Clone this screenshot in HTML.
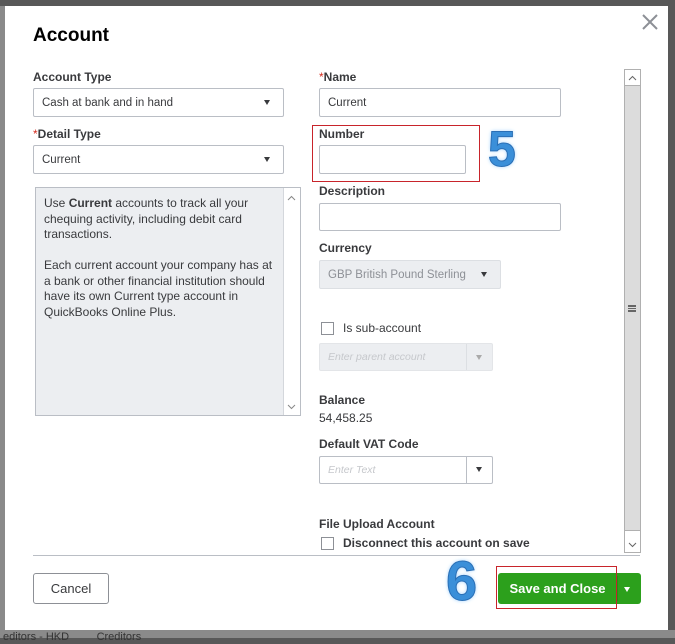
<!DOCTYPE html>
<html><head><meta charset="utf-8"><style>
*{box-sizing:border-box;margin:0;padding:0}
body{width:675px;height:638px;overflow:hidden;background:#585858;font-family:"Liberation Sans",sans-serif;color:#393a3d;position:relative}
.a{position:absolute}
.lbl{position:absolute;font-size:12px;font-weight:bold;color:#393a3d}
.req{color:#d52b1e;font-weight:normal}
.inp{position:absolute;border:1px solid #babec5;border-radius:2px;background:#fff;font-size:11.5px;padding-left:8px;display:flex;align-items:center}
.tri{position:absolute;width:0;height:0;border-left:3.5px solid transparent;border-right:3.5px solid transparent;border-top:5px solid #393a3d}
.cb{position:absolute;width:13px;height:13px;border:1px solid #8d9096;background:#fff}
.big{position:absolute;font-weight:bold;color:#3a8fd9;font-size:50px;text-shadow:0 0 3px #bfe0ff,0 0 5px #bfe0ff;-webkit-text-stroke:1px #2a6fb5}
</style></head><body>
<div class="a" style="left:0;top:6px;width:5px;height:632px;background:#8a8a8a"></div>
<div class="a" style="left:0;top:630px;width:675px;height:8px;background:#8a8a8a;font-size:11px;color:#333;line-height:14px;white-space:nowrap">&nbsp;editors - HKD&nbsp;&nbsp;&nbsp;&nbsp;&nbsp;&nbsp;&nbsp;&nbsp;&nbsp;Creditors</div>
<div class="a" style="left:5px;top:6px;width:663px;height:624px;background:#fff"></div>

<div class="a" style="left:33px;top:25px;font-size:19px;font-weight:bold;color:#000">Account</div>
<svg class="a" style="left:642px;top:14px" width="16" height="16"><path d="M1 1L15 15M15 1L1 15" stroke="#8d9096" stroke-width="2"/></svg>

<div class="lbl" style="left:33px;top:70px">Account Type</div>
<div class="inp" style="left:33px;top:88px;width:251px;height:29px">Cash at bank and in hand</div>
<div class="tri" style="left:264px;top:100px"></div>
<div class="lbl" style="left:33px;top:127px"><span class="req">*</span>Detail Type</div>
<div class="inp" style="left:33px;top:145px;width:251px;height:29px">Current</div>
<div class="tri" style="left:264px;top:157px"></div>

<div class="a" style="left:35px;top:187px;width:266px;height:229px;background:#eceef1;border:1px solid #babec5"></div>
<div class="a" style="left:283px;top:188px;width:17px;height:227px;background:#fff;border-left:1px solid #d4d7dc"></div>
<svg class="a" style="left:287px;top:195px" width="9" height="6"><path d="M1 5L4.5 1.5L8 5" stroke="#888" fill="none"/></svg>
<svg class="a" style="left:287px;top:404px" width="9" height="6"><path d="M1 1L4.5 4.5L8 1" stroke="#888" fill="none"/></svg>
<div class="a" style="left:44px;top:196px;width:230px;font-size:12px;line-height:15.5px;color:#393a3d">Use <b>Current</b> accounts to track all your chequing activity, including debit card transactions.<br><br>Each current account your company has at a bank or other financial institution should have its own Current type account in QuickBooks Online Plus.</div>

<div class="lbl" style="left:319px;top:70px"><span class="req">*</span>Name</div>
<div class="inp" style="left:319px;top:88px;width:242px;height:29px">Current</div>
<div class="a" style="left:312px;top:125px;width:168px;height:57px;border:1px solid #c8242b"></div>
<div class="lbl" style="left:319px;top:127px">Number</div>
<div class="inp" style="left:319px;top:145px;width:147px;height:29px"></div>
<div class="big" style="left:488px;top:120px">5</div>
<div class="lbl" style="left:319px;top:184px">Description</div>
<div class="inp" style="left:319px;top:203px;width:242px;height:28px"></div>
<div class="lbl" style="left:319px;top:241px">Currency</div>
<div class="inp" style="left:319px;top:260px;width:182px;height:29px;background:#eceef1;color:#8d9096;border-color:#dcdfe3">GBP British Pound Sterling</div>
<div class="tri" style="left:481px;top:272px"></div>
<div class="cb" style="left:321px;top:322px"></div>
<div class="a" style="left:343px;top:321px;font-size:12px">Is sub-account</div>
<div class="inp" style="left:319px;top:343px;width:174px;height:28px;background:#eceef1;color:#c6c8cc;border-color:#e3e5e8;font-style:italic;font-size:10.5px">Enter parent account</div>
<div class="a" style="left:466px;top:344px;width:1px;height:26px;background:#dcdfe3"></div>
<div class="tri" style="left:476px;top:355px;border-top-color:#aaa"></div>
<div class="lbl" style="left:319px;top:393px">Balance</div>
<div class="a" style="left:319px;top:411px;font-size:12px">54,458.25</div>
<div class="lbl" style="left:319px;top:437px">Default VAT Code</div>
<div class="inp" style="left:319px;top:456px;width:174px;height:28px;color:#c6c8cc;font-style:italic;font-size:10.5px">Enter Text</div>
<div class="a" style="left:466px;top:457px;width:1px;height:26px;background:#babec5"></div>
<div class="tri" style="left:476px;top:467px"></div>
<div class="lbl" style="left:319px;top:517px">File Upload Account</div>
<div class="cb" style="left:321px;top:537px"></div>
<div class="a" style="left:343px;top:536px;font-size:12px;font-weight:bold">Disconnect this account on save</div>

<div class="a" style="left:624px;top:69px;width:17px;height:484px;border:1px solid #b0b0b0;background:#dcdcdc"></div>
<div class="a" style="left:625px;top:70px;width:15px;height:16px;background:#fff;border-bottom:1px solid #b0b0b0"></div>
<svg class="a" style="left:628px;top:75px" width="9" height="6"><path d="M1 5L4.5 1.5L8 5" stroke="#666" fill="none"/></svg>
<div class="a" style="left:625px;top:530px;width:15px;height:22px;background:#fff;border-top:1px solid #b0b0b0"></div>
<svg class="a" style="left:628px;top:542px" width="9" height="6"><path d="M1 1L4.5 4.5L8 1" stroke="#666" fill="none"/></svg>
<div class="a" style="left:628px;top:305px;width:8px;height:7px;border-top:2px solid #666;border-bottom:2px solid #666"></div>
<div class="a" style="left:628px;top:308px;width:8px;height:1px;background:#666"></div>

<div class="a" style="left:33px;top:555px;width:607px;height:1px;background:#babec5"></div>
<div class="a" style="left:33px;top:573px;width:76px;height:31px;border:1px solid #8d9096;border-radius:3px;font-size:13px;display:flex;align-items:center;justify-content:center;color:#393a3d">Cancel</div>
<div class="big" style="left:446px;top:548px;font-size:56px">6</div>
<div class="a" style="left:498px;top:573px;width:143px;height:31px;background:#2ca01c;border-radius:3px"></div>
<div class="a" style="left:498px;top:573px;width:119px;height:31px;color:#fff;font-size:13px;font-weight:bold;display:flex;align-items:center;justify-content:center">Save and Close</div>
<div class="a" style="left:617px;top:576px;width:1px;height:25px;background:#259014"></div>
<div class="tri" style="left:624px;top:587px;border-top-color:#fff"></div>
<div class="a" style="left:496px;top:566px;width:121px;height:43px;border:1px solid #c8242b"></div>
</body></html>
